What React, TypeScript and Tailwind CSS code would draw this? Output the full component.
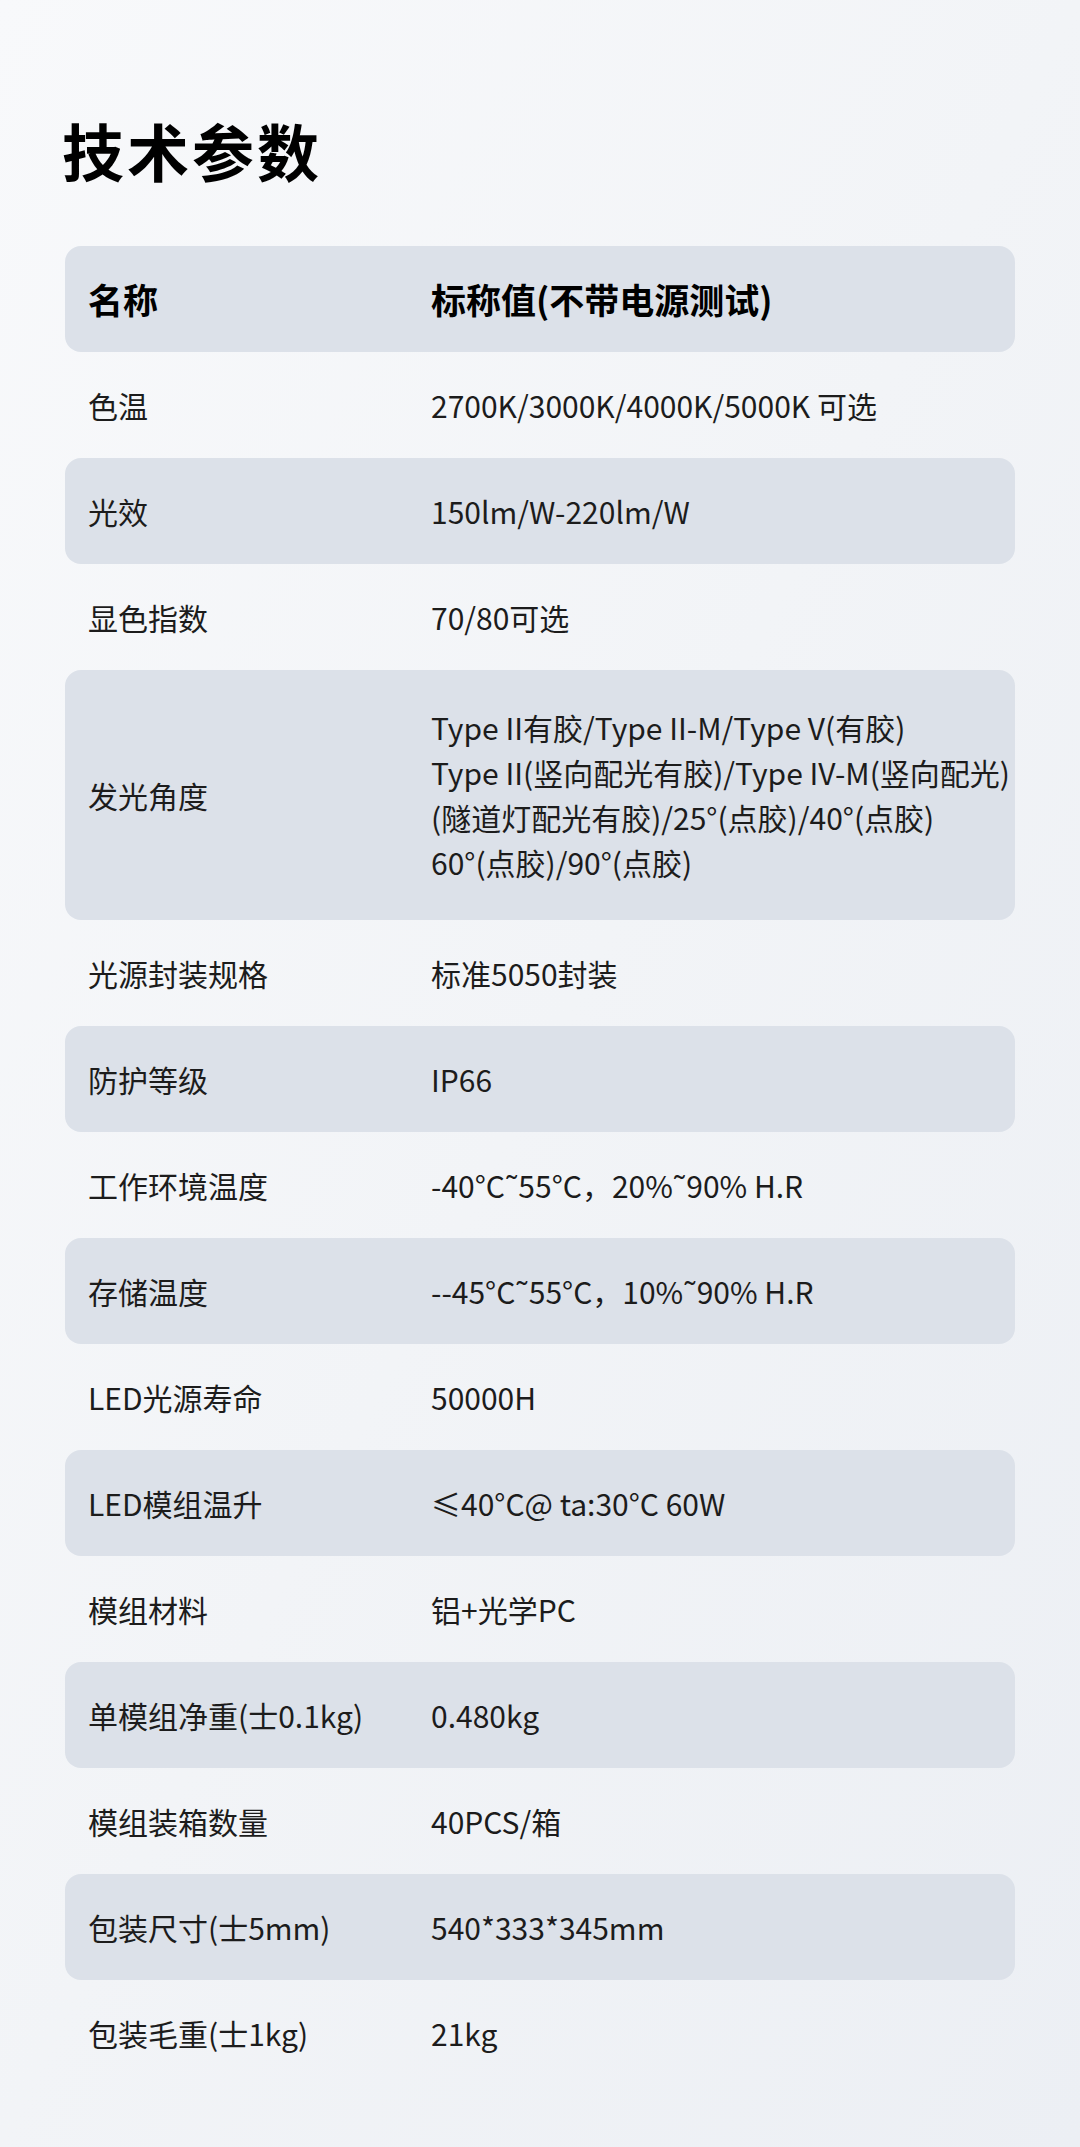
const rows: { label: string; value: string[] }[] = [
  { label: "色温", value: ["2700K/3000K/4000K/5000K 可选"] },
  { label: "光效", value: ["150lm/W-220lm/W"] },
  { label: "显色指数", value: ["70/80可选"] },
  {
    label: "发光角度",
    value: [
      "Type II有胶/Type II-M/Type V(有胶)",
      "Type II(竖向配光有胶)/Type IV-M(竖向配光)",
      "(隧道灯配光有胶)/25°(点胶)/40°(点胶)",
      "60°(点胶)/90°(点胶)",
    ],
  },
  { label: "光源封装规格", value: ["标准5050封装"] },
  { label: "防护等级", value: ["IP66"] },
  { label: "工作环境温度", value: ["-40°C˜55°C，20%˜90% H.R"] },
  { label: "存储温度", value: ["--45°C˜55°C，10%˜90% H.R"] },
  { label: "LED光源寿命", value: ["50000H"] },
  { label: "LED模组温升", value: ["≤40°C@ ta:30°C 60W"] },
  { label: "模组材料", value: ["铝+光学PC"] },
  { label: "单模组净重(士0.1kg)", value: ["0.480kg"] },
  { label: "模组装箱数量", value: ["40PCS/箱"] },
  { label: "包装尺寸(士5mm)", value: ["540*333*345mm"] },
  { label: "包装毛重(士1kg)", value: ["21kg"] },
]

export default function App() {
  return (
    <div
      className="min-h-[2147px] w-[1080px] bg-gradient-to-br from-[#f8f9fb] via-[#f2f4f7] to-[#eceff4] pt-[112px] pb-[60px] text-[#1c1c1c]"
      style={{ fontFamily: '"Noto Sans CJK SC", "Noto Sans", sans-serif' }}
    >
      <h1 className="pl-[62px] text-[62px] font-bold leading-[76px] tracking-[3px] text-black">技术参数</h1>

      <div className="mx-[65px] mt-[58px] flex flex-col">
        {/* Header */}
        <div className="grid h-[106px] grid-cols-[366px_1fr] items-center rounded-[16px] bg-[#dce1e9] text-[35px] font-bold text-black">
          <div className="pl-[23px]">名称</div>
          <div>标称值(不带电源测试)</div>
        </div>

        {rows.map((row, i) => (
          <div
            key={row.label}
            className={
              "grid grid-cols-[366px_1fr] items-center rounded-[16px] text-[30px] " +
              (i % 2 === 1 ? "bg-[#dce1e9] " : "") +
              (row.value.length > 1 ? "py-[35px]" : "h-[106px]")
            }
          >
            <div className="pl-[23px] whitespace-nowrap">{row.label}</div>
            <div className="leading-[45px]">
              {row.value.map((v) => (
                <div key={v} className="whitespace-nowrap">
                  {v}
                </div>
              ))}
            </div>
          </div>
        ))}
      </div>
    </div>
  )
}
